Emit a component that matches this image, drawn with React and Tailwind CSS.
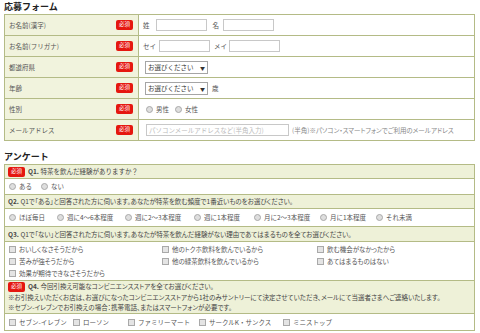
import React from 'react';

const Badge = () => (
    <span className="inline-flex items-center justify-center w-[17px] h-[10px] rounded-[2px] bg-[#e5170f] text-white text-[5.5px] leading-none shrink-0">
        必須
    </span>
);

const Radio = ({ label, w }) => (
    <span className={`flex items-center gap-[3px] shrink-0 ${w || ''}`}>
        <span className="w-[7px] h-[7px] rounded-full border border-[#a9a9a9] bg-[#dedede] shrink-0" />
        <span>{label}</span>
    </span>
);

const Check = ({ label, w }) => (
    <span className={`flex items-center gap-[3px] shrink-0 ${w || ''}`}>
        <span className="w-[7px] h-[7px] border border-[#a9a9a9] bg-[#e4e4e4] shrink-0" />
        <span>{label}</span>
    </span>
);

const SelectBox = () => (
    <span className="flex items-center justify-between w-[63px] h-[13px] border border-[#a5a5a5] bg-white px-[2px] text-[#333]">
        <span>お選びください</span>
        <span className="text-[5px]">▼</span>
    </span>
);

const TextBox = ({ w, placeholder }) => (
    <span className={`flex items-center h-[12px] border border-[#c8c8c8] bg-white px-[2px] text-[#bbb] whitespace-nowrap ${w}`}>
        {placeholder}
    </span>
);

const formRows = [
    {
        label: 'お名前(漢字)',
        body: (
            <>
                <span>姓</span>
                <TextBox w="w-[51px] ml-[6px]" />
                <span className="ml-[6px]">名</span>
                <TextBox w="w-[51px] ml-[4px]" />
            </>
        ),
    },
    {
        label: 'お名前(フリガナ)',
        body: (
            <>
                <span>セイ</span>
                <TextBox w="w-[51px] ml-[3px]" />
                <span className="ml-[4px]">メイ</span>
                <TextBox w="w-[51px] ml-[2px]" />
            </>
        ),
    },
    { label: '都道府県', body: <span className="ml-[2px]"><SelectBox /></span> },
    {
        label: '年齢',
        body: (
            <>
                <span className="ml-[2px]"><SelectBox /></span>
                <span className="ml-[4px]">歳</span>
            </>
        ),
    },
    {
        label: '性別',
        body: (
            <span className="flex gap-[6px] ml-[3px]">
                <Radio label="男性" />
                <Radio label="女性" />
            </span>
        ),
    },
    {
        label: 'メールアドレス',
        body: (
            <>
                <TextBox w="w-[143px] ml-[3px]" placeholder="パソコンメールアドレスなど(半角入力)" />
                <span className="ml-[3px] text-[#888] whitespace-nowrap [font-feature-settings:'palt']">(半角)※パソコン・スマートフォンでご利用のメールアドレス</span>
            </>
        ),
    },
];

const q2 = [
    ['ほぼ毎日', 'w-[48px]'],
    ['週に4〜6本程度', 'w-[68px]'],
    ['週に2〜3本程度', 'w-[69px]'],
    ['週に1本程度', 'w-[60px]'],
    ['月に2〜3本程度', 'w-[66px]'],
    ['月に1本程度', 'w-[56px]'],
    ['それ未満', ''],
];
const q3 = [
    'おいしくなさそうだから', '他のトクホ飲料を飲んでいるから', '飲む機会がなかったから',
    '苦みが強そうだから', '他の緑茶飲料を飲んでいるから', 'あてはまるものはない',
    '効果が期待できなさそうだから',
];
const q4 = [
    ['セブン-イレブン', 'w-[64px]'],
    ['ローソン', 'w-[55px]'],
    ['ファミリーマート', 'w-[71px]'],
    ['サークルK・サンクス', 'w-[84px]'],
    ['ミニストップ', ''],
];

export default function App() {
    return (
        <div className="w-[480px] h-[333px] bg-white overflow-hidden text-[6.5px] leading-none text-[#555] font-['Noto_Sans_CJK_JP','Noto_Sans',sans-serif]">

            {/* 応募フォーム */}
            <h2 className="h-[14px] pl-[4px] text-[9px] leading-[14px] font-bold text-[#222]">応募フォーム</h2>
            <div className="ml-[4px] w-[471px] border border-[#b4bb86]">
                {formRows.map((row, i) => (
                    <div key={row.label} className={`flex ${i > 0 ? 'h-[21px] border-t border-[#b4bb86]' : 'h-[20px]'}`}>
                        <div className="w-[134px] shrink-0 flex items-center justify-between pl-[4px] pr-[5px] bg-[#f1f3dd] border-r border-[#b4bb86]">
                            <span>{row.label}</span>
                            <Badge />
                        </div>
                        <div className="flex-1 flex items-center pl-[4px]">{row.body}</div>
                    </div>
                ))}
            </div>

            {/* アンケート */}
            <h2 className="mt-[9px] h-[14px] pl-[4px] text-[9px] leading-[14px] font-bold text-[#222]">アンケート</h2>
            <div className="ml-[4px] w-[471px] border border-[#b4bb86]">
                <div className="flex items-center gap-[3px] h-[13px] pl-[3px] bg-[#eef1d8] text-[#444]">
                    <Badge />
                    <span><b className="font-bold">Q1.</b> 特茶を飲んだ経験がありますか？</span>
                </div>
                <div className="flex items-center h-[16px] pl-[4px] border-t border-[#b4bb86]">
                    <Radio label="ある" w="w-[32px]" />
                    <Radio label="ない" />
                </div>
                <div className="flex items-center h-[14px] pl-[3px] bg-[#eef1d8] text-[#444] border-t border-[#b4bb86] whitespace-nowrap [font-feature-settings:'palt']">
                    <span><b className="font-bold">Q2.</b> Q1で「ある」と回答された方に伺います。あなたが特茶を飲む頻度で1番近いものをお選びください。</span>
                </div>
                <div className="flex items-center h-[18px] pl-[4px] border-t border-[#b4bb86]">
                    {q2.map(([l, w]) => <Radio key={l} label={l} w={w} />)}
                </div>
                <div className="flex items-center h-[15px] pl-[3px] bg-[#eef1d8] text-[#444] border-t border-[#b4bb86] whitespace-nowrap [font-feature-settings:'palt']">
                    <span><b className="font-bold">Q3.</b> Q1で「ない」と回答された方に伺います。あなたが特茶を飲んだ経験がない理由であてはまるものを全てお選びください。</span>
                </div>
                <div className="grid grid-cols-[153px_155px_1fr] auto-rows-[12px] items-center h-[39px] pt-[1px] pl-[4px] border-t border-[#b4bb86] [font-feature-settings:'palt']">
                    {q3.map(l => <Check key={l} label={l} />)}
                </div>
                <div className="flex flex-col justify-center h-[33px] pl-[3px] bg-[#eef1d8] text-[#444] border-t border-[#b4bb86] leading-[10.5px] whitespace-nowrap [font-feature-settings:'palt']">
                    <div className="flex items-center gap-[3px]">
                        <Badge />
                        <span><b className="font-bold">Q4.</b> 今回引換え可能なコンビニエンスストアを全てお選びください。</span>
                    </div>
                    <div>※お引換えいただくお店は、お選びになったコンビニエンスストアから1社のみサントリーにて決定させていただき、メールにて当選者さまへご連絡いたします。</div>
                    <div>※セブン-イレブンでお引換えの場合：携帯電話、またはスマートフォンが必要です。</div>
                </div>
                <div className="flex items-center h-[17px] pl-[4px] border-t border-[#b4bb86]">
                    {q4.map(([l, w]) => <Check key={l} label={l} w={w} />)}
                </div>
            </div>
        </div>
    );
}
